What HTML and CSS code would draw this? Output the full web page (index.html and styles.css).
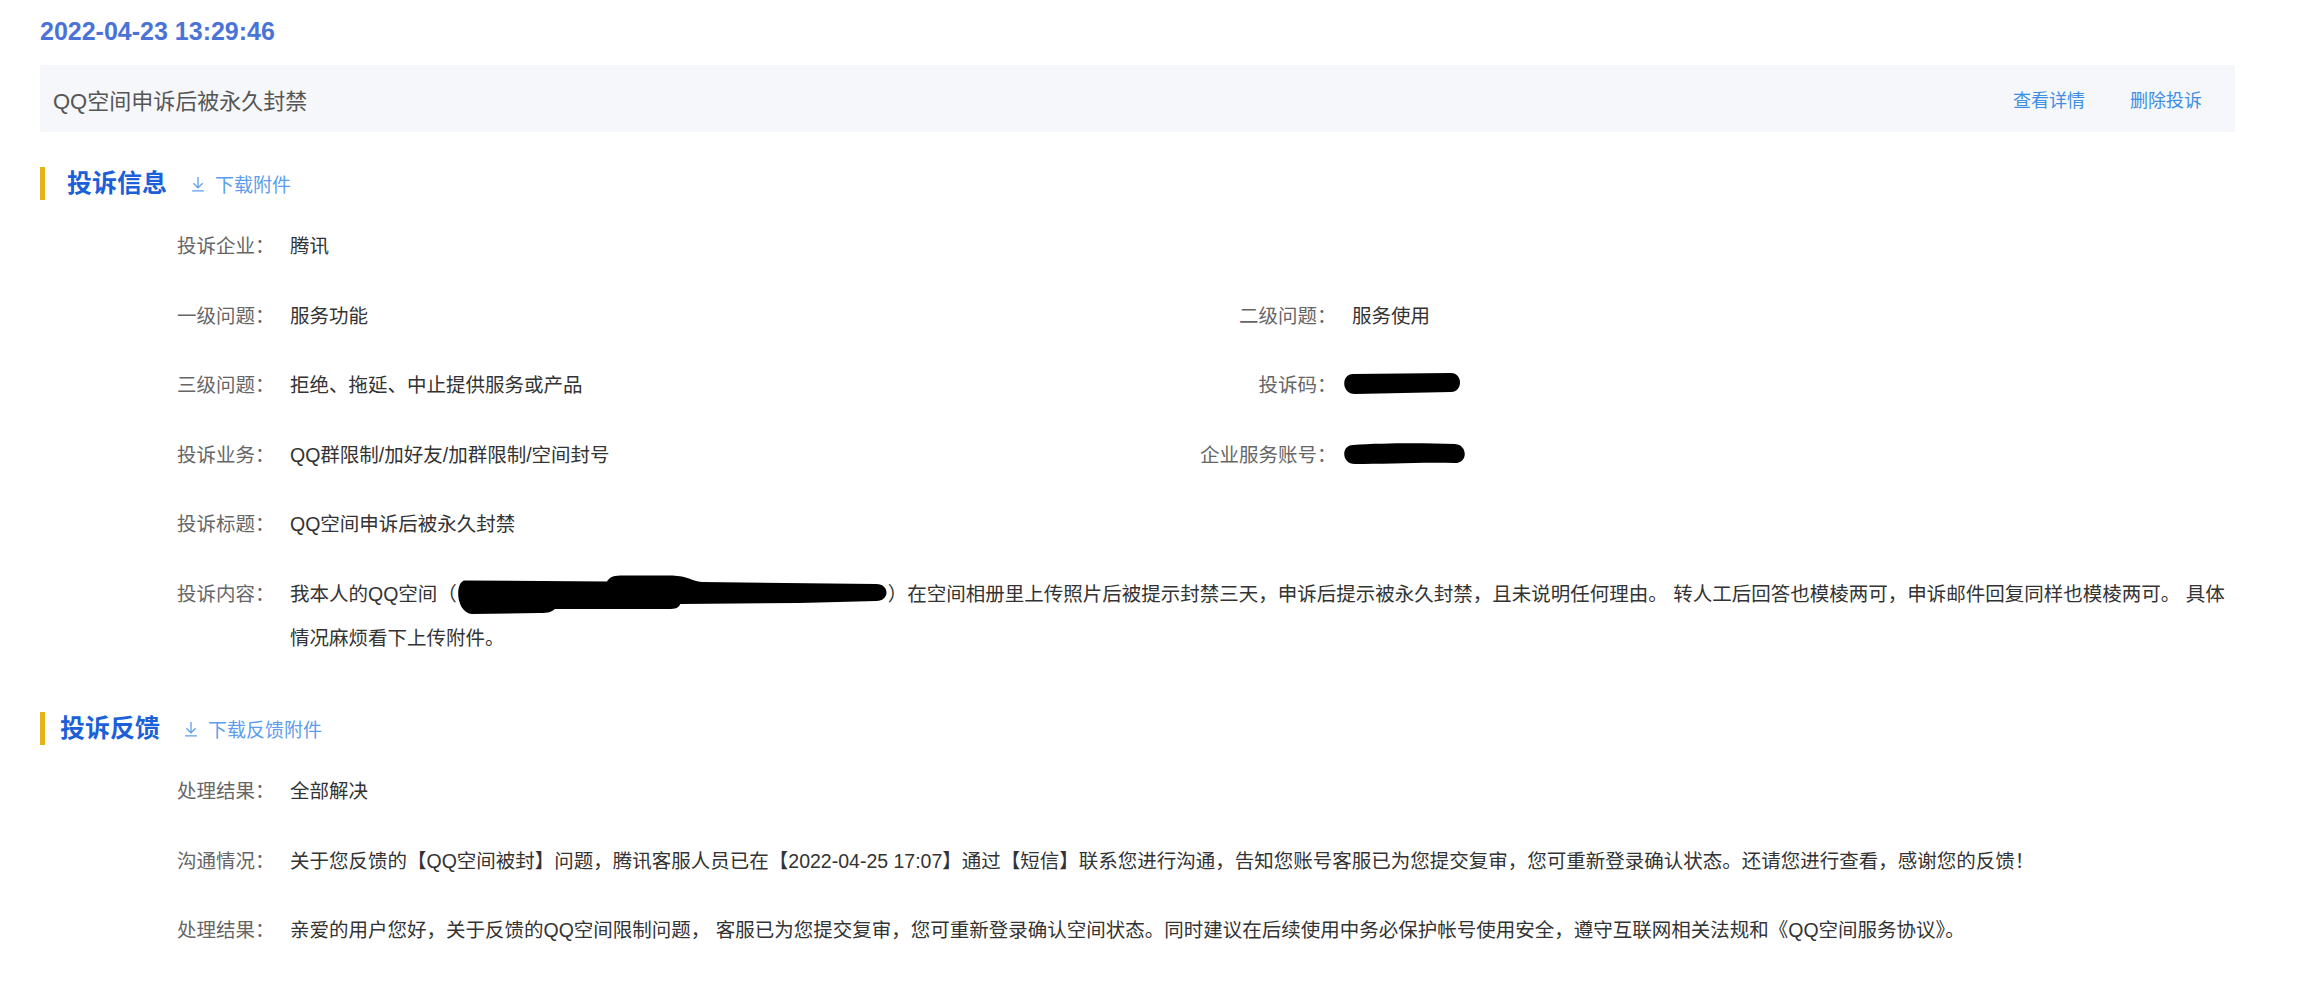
FILE: index.html
```html
<!DOCTYPE html>
<html lang="zh-CN">
<head>
<meta charset="utf-8">
<title>投诉详情</title>
<link rel="stylesheet" href="styles.css">
</head>
<body>
<div class="page">
  <div class="date">2022-04-23 13:29:46</div>

  <div class="title-bar">
    <span class="title">QQ空间申诉后被永久封禁</span>
    <div class="actions">
      <a class="action" href="#">查看详情</a>
      <a class="action" href="#">删除投诉</a>
    </div>
  </div>

  <section class="section section--info">
    <div class="sec-head sec-head--wide">
      <h2 class="sec-title">投诉信息</h2>
      <a class="dl" href="#"><svg class="dl-icon" viewBox="0 0 13 15" width="14" height="16"><path d="M6.5 1V11M2.2 6.8L6.5 11.1L10.8 6.8M1 14H12" fill="none" stroke="currentColor" stroke-width="1.2"/></svg>下载附件</a>
    </div>
    <div class="fields">
      <div class="field field--full"><span class="label">投诉企业：</span><span class="value">腾讯</span></div>
      <div class="field"><span class="label">一级问题：</span><span class="value">服务功能</span></div>
      <div class="field"><span class="label">二级问题：</span><span class="value">服务使用</span></div>
      <div class="field"><span class="label">三级问题：</span><span class="value">拒绝、拖延、中止提供服务或产品</span></div>
      <div class="field"><span class="label">投诉码：</span><span class="value"><svg class="mask mask--code" viewBox="0 0 120 44" width="120" height="44"><path d="M10 11L108 10C120 10 120 29 108 29L12 31C-2 31 -2 11 10 11Z"/></svg></span></div>
      <div class="field"><span class="label">投诉业务：</span><span class="value">QQ群限制/加好友/加群限制/空间封号</span></div>
      <div class="field"><span class="label">企业服务账号：</span><span class="value"><svg class="mask mask--code" viewBox="0 0 124 44" width="124" height="44"><path d="M10 12C40 10 80 10 112 11C125 12 125 30 112 30C80 29 40 31 12 31C-2 31 -2 12 10 12Z"/></svg></span></div>
      <div class="field field--full"><span class="label">投诉标题：</span><span class="value">QQ空间申诉后被永久封禁</span></div>
      <div class="field field--full"><span class="label">投诉内容：</span><span class="value">我本人的QQ空间（<svg class="mask mask--long" viewBox="0 0 440 44" width="431" height="44" preserveAspectRatio="none"><path d="M8 8.5L153 9.5C157 4 160 3.5 170 3.5L220 3.5C235 4 240 9 250 10L428 12C442 12 442 29 428 29L350 31L228 32C226 36 224 37 215 37L100 37C96 40 94 41 85 41L15 42C-2 40 -2 9 8 8.5Z"/></svg>）在空间相册里上传照片后被提示封禁三天，申诉后提示被永久封禁，且未说明任何理由。 转人工后回答也模棱两可，申诉邮件回复同样也模棱两可。 具体情况麻烦看下上传附件。</span></div>
    </div>
  </section>

  <section class="section section--feedback">
    <div class="sec-head sec-head--narrow">
      <h2 class="sec-title">投诉反馈</h2>
      <a class="dl" href="#"><svg class="dl-icon" viewBox="0 0 13 15" width="14" height="16"><path d="M6.5 1V11M2.2 6.8L6.5 11.1L10.8 6.8M1 14H12" fill="none" stroke="currentColor" stroke-width="1.2"/></svg>下载反馈附件</a>
    </div>
    <div class="fields">
      <div class="field field--full"><span class="label">处理结果：</span><span class="value">全部解决</span></div>
      <div class="field field--full"><span class="label">沟通情况：</span><span class="value">关于您反馈的【QQ空间被封】问题，腾讯客服人员已在【2022-04-25 17:07】通过【短信】联系您进行沟通，告知您账号客服已为您提交复审，您可重新登录确认状态。还请您进行查看，感谢您的反馈！</span></div>
      <div class="field field--full"><span class="label">处理结果：</span><span class="value">亲爱的用户您好，关于反馈的QQ空间限制问题， 客服已为您提交复审，您可重新登录确认空间状态。同时建议在后续使用中务必保护帐号使用安全，遵守互联网相关法规和《QQ空间服务协议》。</span></div>
    </div>
  </section>
</div>
</body>
</html>
```

FILE: styles.css
```css
html, body {
  margin: 0;
  padding: 0;
  background: #ffffff;
}

body {
  font-family: "Liberation Sans", "Noto Sans CJK SC", sans-serif;
  color: #333333;
}

.page {
  padding: 0 81px 0 40px;
}

.date {
  padding-top: 16px;
  line-height: 30px;
  font-size: 25px;
  font-weight: bold;
  color: #4a73d8;
}

.title-bar {
  margin-top: 19px;
  height: 67px;
  background: #f5f7fa;
  display: flex;
  align-items: center;
  justify-content: space-between;
  padding: 0 33px 0 13px;
}

.title {
  font-size: 22px;
  color: #555555;
}

.actions {
  display: flex;
  gap: 45px;
}

.action {
  font-size: 18px;
  color: #3d8ee5;
  text-decoration: none;
}

.section--info {
  margin-top: 35px;
}

.section--feedback {
  margin-top: 52.5px;
}

.sec-head {
  display: flex;
  align-items: center;
  height: 33px;
  border-left: 5px solid #e3b41b;
}

.sec-head--wide {
  padding-left: 22px;
}

.sec-head--narrow {
  padding-left: 15px;
}

.sec-title {
  margin: 0;
  font-size: 25px;
  font-weight: bold;
  color: #1b5fd9;
  line-height: 33px;
}

.dl {
  display: flex;
  align-items: center;
  margin-left: 24px;
  font-size: 19px;
  color: #5c9ded;
  text-decoration: none;
}

.dl-icon {
  margin-right: 10px;
}

.fields {
  margin-top: 24px;
  padding-left: 84.5px;
  display: grid;
  grid-template-columns: 1062px 1fr;
  row-gap: 25.5px;
  font-size: 19.5px;
}

.field {
  display: flex;
  line-height: 44px;
}

.field--full {
  grid-column: 1 / -1;
}

.label {
  flex: none;
  width: 150px;
  text-align: right;
  color: #666666;
}

.value {
  flex: 1;
  min-width: 0;
  margin-left: 15.5px;
  color: #333333;
}

.mask {
  vertical-align: top;
  fill: #000000;
}

.mask--code {
  margin-left: -9px;
}
```
